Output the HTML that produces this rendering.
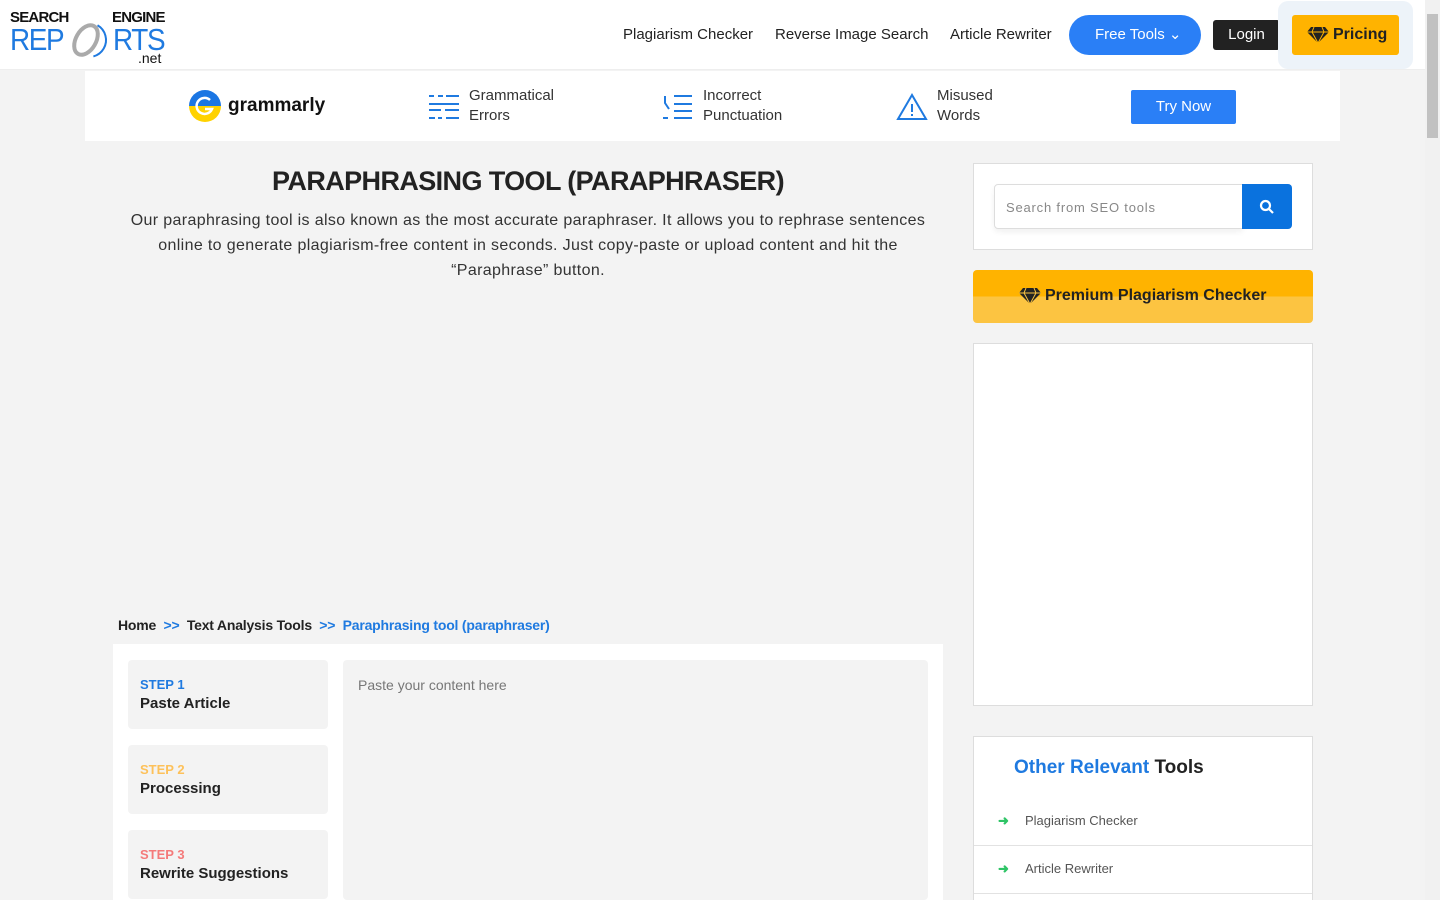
<!DOCTYPE html>
<html><head><meta charset="utf-8"><style>
*{box-sizing:border-box;margin:0;padding:0}
html,body{width:1440px;height:900px;overflow:hidden}
body{background:#f3f3f3;font-family:"Liberation Sans",sans-serif;position:relative;color:#222}
.abs{position:absolute}
#hdr{left:0;top:0;width:1425px;height:70px;background:#fff;border-bottom:1px solid #eee}
.nav{top:26px;font-size:15px;color:#222}
#sb{left:1425px;top:0;width:15px;height:900px;background:#f1f1f1}
#sb div{position:absolute;left:2px;top:14px;width:11px;height:124px;background:#c1c1c1}
#gb{left:85px;top:71px;width:1255px;height:70px;background:#fff}
.gt{font-size:15px;line-height:20px;color:#333}
.stp{left:128px;width:200px;height:69px;background:#f3f3f3;border-radius:4px;padding:17px 12px}
.stp b{display:block;font-size:13px}
.stp span{display:block;font-size:15px;font-weight:bold;color:#222;margin-top:3px}
</style></head><body>
<div id="hdr" class="abs"></div>
<div class="abs" style="left:10px;top:9px;font-size:15px;font-weight:bold;color:#111;letter-spacing:-0.8px">SEARCH</div>
<div class="abs" style="left:112px;top:9px;font-size:15px;font-weight:bold;color:#111;letter-spacing:-0.8px">ENGINE</div>
<div class="abs" style="left:10px;top:22px;font-size:31px;color:#1f7ae0;letter-spacing:-1.5px;transform:scaleX(0.9);transform-origin:left">REP</div>
<svg class="abs" style="left:68px;top:20px" width="42" height="40"><circle cx="21" cy="20" r="17" fill="none" stroke="#1f7ae0" stroke-width="2" stroke-dasharray="40 70" transform="rotate(-60 21 20)"/><ellipse cx="18" cy="20" rx="10" ry="16" fill="none" stroke="#aaa" stroke-width="4" transform="rotate(30 18 20)"/></svg>
<div class="abs" style="left:113px;top:22px;font-size:31px;color:#1f7ae0;letter-spacing:-1.5px;transform:scaleX(0.9);transform-origin:left">RTS</div>
<div class="abs" style="left:138px;top:50px;font-size:14px;color:#111">.net</div>
<div class="abs nav" style="left:623px">Plagiarism Checker</div>
<div class="abs nav" style="left:775px">Reverse Image Search</div>
<div class="abs nav" style="left:950px">Article Rewriter</div>
<div class="abs" style="left:1069px;top:15px;width:132px;height:40px;border-radius:20px;background:#2a7ff6;color:#fff;font-size:15px;line-height:40px;padding-left:26px">Free Tools &#8964;</div>
<div class="abs" style="left:1213px;top:20px;width:67px;height:30px;border-radius:3px;background:#222;color:#fff;font-size:15px;line-height:30px;text-align:center">Login</div>
<div class="abs" style="left:1278px;top:1px;width:135px;height:68px;border-radius:10px;background:#edf3f9"></div>
<div class="abs" style="left:1292px;top:15px;width:107px;height:40px;border-radius:3px;background:#ffb300;color:#222;font-size:16px;font-weight:bold;line-height:40px;padding-left:41px">Pricing</div>
<svg class="abs" style="left:1307px;top:26px" width="22" height="18"><path d="M4 1h14l4 5-11 11L0 6z" fill="#222"/><path d="M0 6h22M7 1l-2 5 6 11 6-11-2-5" stroke="#ffb300" stroke-width="1" fill="none"/></svg>
<div id="sb" class="abs"><div></div></div>

<div id="gb" class="abs"></div>
<svg class="abs" style="left:189px;top:90px" width="32" height="32"><path d="M0 16a16 16 0 0 1 32 0z" fill="#1b76e3"/><path d="M0 16a16 16 0 0 0 32 0z" fill="#ffd200"/><path d="M21 10a8 8 0 1 0 2 9h-7" fill="none" stroke="#fff" stroke-width="2.5"/></svg>
<div class="abs" style="left:228px;top:95px;font-size:19px;font-weight:bold;color:#111">grammarly</div>
<svg class="abs" style="left:428px;top:94px" width="32" height="26" stroke="#1f7ae0" stroke-width="2"><path d="M1 2h5M10 2h5M18 2h13M1 10h30M1 16h12M17 16h14M1 24h6M10 24h4M18 24h13"/></svg>
<div class="abs gt" style="left:469px;top:86px">Grammatical<br>Errors</div>
<svg class="abs" style="left:662px;top:94px" width="32" height="26" stroke="#1f7ae0" stroke-width="2" fill="none"><path d="M3 2v7l4 6M12 2h18M12 10h18M12 17h18M1 24h5M12 24h18"/></svg>
<div class="abs gt" style="left:703px;top:86px">Incorrect<br>Punctuation</div>
<svg class="abs" style="left:896px;top:93px" width="32" height="28" stroke="#1f7ae0" stroke-width="2" fill="none"><path d="M16 2L2 26h28z M16 11v8M16 21v2"/></svg>
<div class="abs gt" style="left:937px;top:86px">Misused<br>Words</div>
<div class="abs" style="left:1131px;top:90px;width:105px;height:34px;border-radius:2px;background:#2a7ff6;color:#fff;font-size:15px;line-height:34px;text-align:center">Try Now</div>

<div class="abs" style="left:113px;top:166px;width:830px;text-align:center;font-size:27px;font-weight:bold;color:#222;letter-spacing:-0.6px">PARAPHRASING TOOL (PARAPHRASER)</div>
<div class="abs" style="left:113px;top:208px;width:830px;text-align:center;font-size:16px;line-height:25px;color:#333;letter-spacing:0.35px">Our paraphrasing tool is also known as the most accurate paraphraser. It allows you to rephrase sentences<br>online to generate plagiarism-free content in seconds. Just copy-paste or upload content and hit the<br>“Paraphrase” button.</div>

<div class="abs" style="left:118px;top:617px;font-size:14px;font-weight:bold;color:#222;letter-spacing:-0.2px">Home &nbsp;<span style="color:#1f7ae0">&gt;&gt;</span>&nbsp; Text Analysis Tools &nbsp;<span style="color:#1f7ae0">&gt;&gt;</span>&nbsp; <span style="color:#1f7ae0">Paraphrasing tool (paraphraser)</span></div>
<div class="abs" style="left:113px;top:644px;width:830px;height:256px;background:#fff"></div>
<div class="abs stp" style="top:660px"><b style="color:#1f7ae0">STEP 1</b><span>Paste Article</span></div>
<div class="abs stp" style="top:745px"><b style="color:#fdc15a">STEP 2</b><span>Processing</span></div>
<div class="abs stp" style="top:830px"><b style="color:#f47a7a">STEP 3</b><span>Rewrite Suggestions</span></div>
<div class="abs" style="left:343px;top:660px;width:585px;height:240px;background:#f3f3f3;border-radius:4px;padding:17px 15px;font-size:14px;color:#777">Paste your content here</div>

<div class="abs" style="left:973px;top:163px;width:340px;height:87px;background:#fff;border:1px solid #ddd"></div>
<div class="abs" style="left:994px;top:184px;width:249px;height:45px;background:#fff;border:1px solid #ddd;border-radius:4px 0 0 4px;box-shadow:0 3px 6px rgba(0,0,0,.06);padding:15px 11px;font-size:13px;color:#888;letter-spacing:0.8px">Search from SEO tools</div>
<div class="abs" style="left:1242px;top:184px;width:50px;height:45px;background:#0a72de;border-radius:0 4px 4px 0"></div>
<svg class="abs" style="left:1259px;top:199px" width="16" height="16" stroke="#fff" stroke-width="2.2" fill="none"><circle cx="6.5" cy="6.5" r="4.5"/><path d="M10 10l4 4"/></svg>
<div class="abs" style="left:973px;top:270px;width:340px;height:53px;border-radius:4px;background:linear-gradient(#ffb300 0,#ffb300 50%,#fcc441 50%);font-size:16px;font-weight:bold;color:#222;line-height:52px;padding-left:72px">Premium Plagiarism Checker</div>
<svg class="abs" style="left:1019px;top:287px" width="22" height="18"><path d="M4 1h14l4 5-11 11L0 6z" fill="#222"/><path d="M0 6h22M7 1l-2 5 6 11 6-11-2-5" stroke="#fcc441" stroke-width="1" fill="none"/></svg>
<div class="abs" style="left:973px;top:343px;width:340px;height:363px;background:#fff;border:1px solid #ddd"></div>
<div class="abs" style="left:973px;top:736px;width:340px;height:170px;background:#fff;border:1px solid #ddd"></div>
<div class="abs" style="left:1014px;top:757px;font-size:19px;font-weight:bold;color:#1f7ae0">Other Relevant <span style="color:#222">Tools</span></div>
<div class="abs" style="left:974px;top:845px;width:338px;height:1px;background:#e2e2e2"></div>
<div class="abs" style="left:974px;top:893px;width:338px;height:1px;background:#e2e2e2"></div>
<div class="abs" style="left:998px;top:813px;font-size:13px;color:#2ec466;font-weight:bold">&#10140;</div>
<div class="abs" style="left:1025px;top:813px;font-size:13px;color:#555">Plagiarism Checker</div>
<div class="abs" style="left:998px;top:861px;font-size:13px;color:#2ec466;font-weight:bold">&#10140;</div>
<div class="abs" style="left:1025px;top:861px;font-size:13px;color:#555">Article Rewriter</div>
</body></html>
